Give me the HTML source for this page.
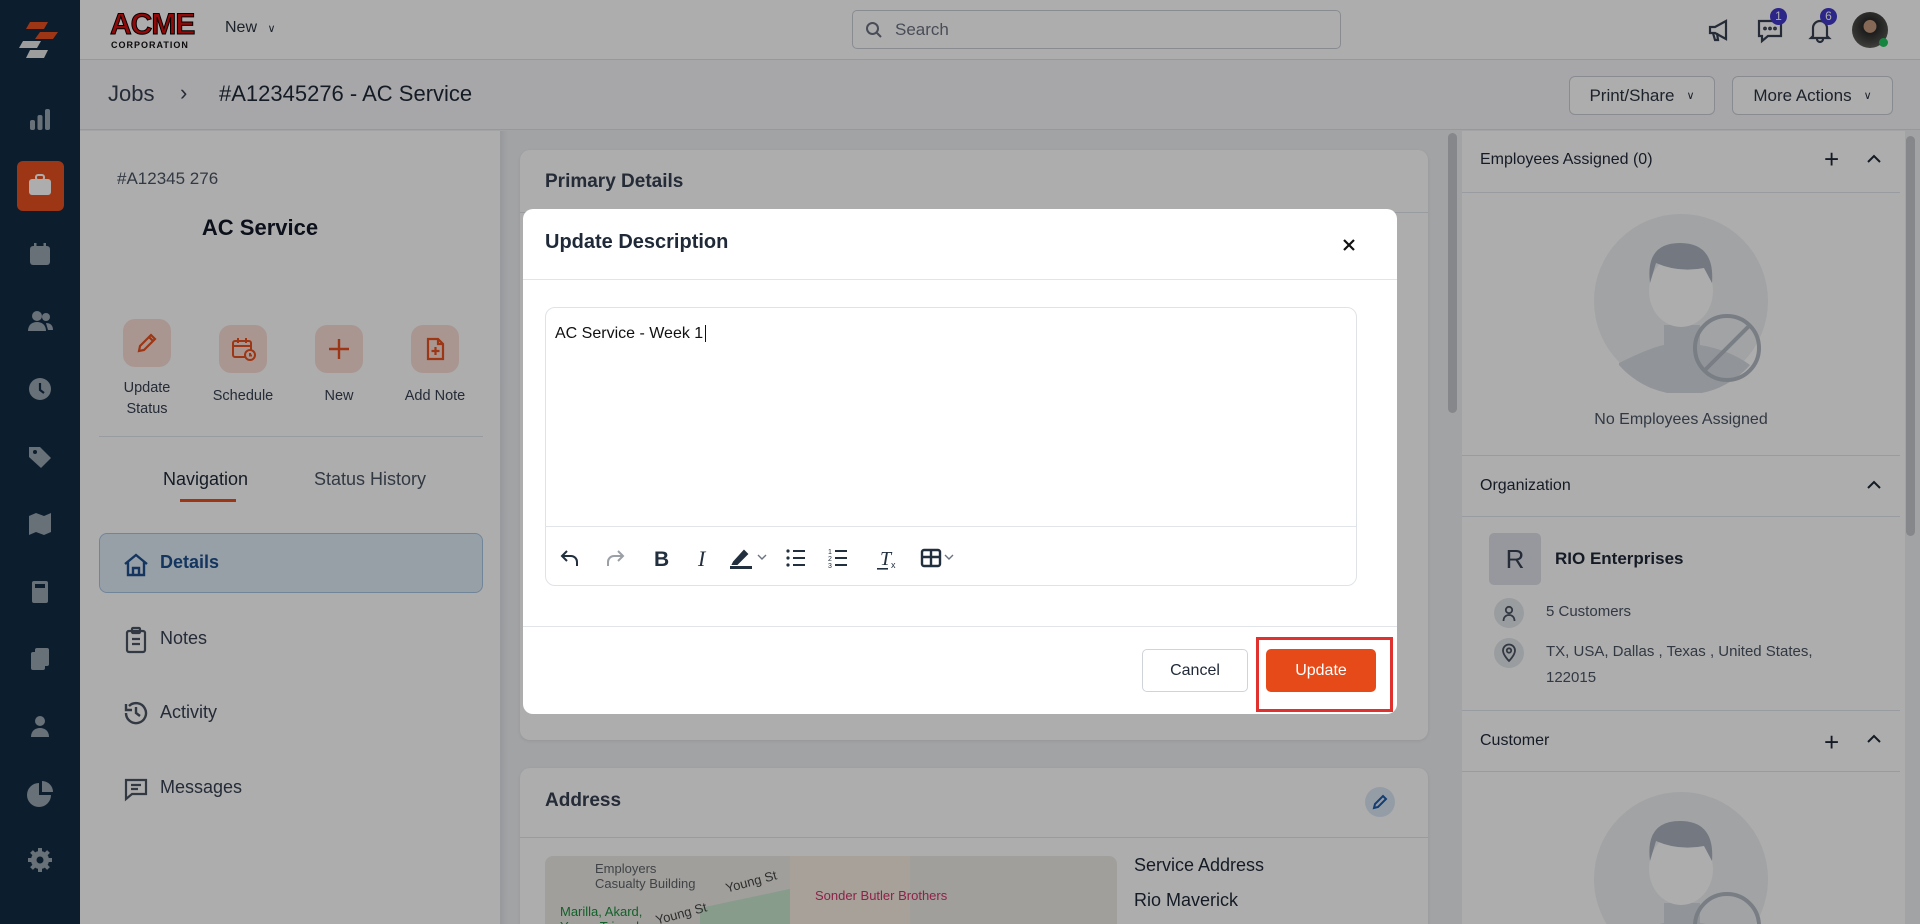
<!DOCTYPE html>
<html style="width:1920px;height:924px;overflow:hidden"><head><meta charset="utf-8">
<style>
*{box-sizing:border-box;margin:0;padding:0}
html,body{width:1920px;height:924px;overflow:hidden}
body{position:relative;font-family:"Liberation Sans",sans-serif;background:#eef0f3;color:#1f2937}
.abs{position:absolute}
.sb{left:0;top:0;width:80px;height:924px;background:#132d45}
.sbi{position:absolute;left:26px;width:28px;height:28px}
.top{left:80px;top:0;width:1840px;height:60px;background:#fff;border-bottom:1px solid #dde1e8}
.crumb{left:80px;top:60px;width:1840px;height:70px;background:#f6f7f9;border-bottom:1px solid #dde1e8}
.btn{position:absolute;border:1px solid #c9ced6;border-radius:6px;background:#fff;font-size:17px;color:#2b3440;display:flex;align-items:center;justify-content:center;gap:12px}
.left{left:80px;top:131px;width:420px;height:793px;background:#fff;overflow:hidden}
.card{background:#fff;border-radius:10px;box-shadow:0 1px 3px rgba(0,0,0,.08);overflow:hidden}
.right{left:1462px;top:131px;width:443px;height:793px;background:#fff;overflow:hidden}
.hdr{font-size:16px;color:#1f2937}
.line{position:absolute;height:1px;background:#e1e5ea}
.act{position:absolute;width:48px;height:48px;border-radius:12px;background:#f9ded6;display:flex;align-items:center;justify-content:center}
.lbl{position:absolute;font-size:14.5px;color:#374151;text-align:center;width:100px}
.nav{position:absolute;left:160px;font-size:18px;color:#374151}
.ov{left:0;top:0;width:1920px;height:924px;background:rgba(0,0,0,.32)}
.modal{left:523px;top:209px;width:874px;height:505px;background:#fff;border-radius:10px}
</style></head><body>
<div class="abs sb">
 <svg class="abs" style="left:18px;top:20px" width="46" height="46" viewBox="0 0 46 46"><polygon points="12,2 30,2 26,9 8,9" fill="#e8501f"/><polygon points="22,12 40,12 35,19 17,19" fill="#e8501f"/><polygon points="5,21 23,21 19,28 1,28" fill="#e8e8e8"/><polygon points="12,30 30,30 26,38 8,38" fill="#e8e8e8"/></svg>
 <svg class="sbi" style="top:105px" viewBox="0 0 28 28" fill="#9aa6b2"><rect x="4" y="15" width="5" height="10" rx="2"/><rect x="11.5" y="10" width="5" height="15" rx="2"/><rect x="19" y="4" width="5" height="21" rx="2"/></svg>
 <div class="abs" style="left:17px;top:161px;width:47px;height:50px;border-radius:6px;background:#e8501f"></div>
 <svg class="sbi" style="top:171px;left:26px" viewBox="0 0 28 28" fill="#fff"><rect x="3" y="8" width="22" height="16" rx="3"/><rect x="10" y="4" width="8" height="5" rx="2" fill="none" stroke="#fff" stroke-width="2"/></svg>
 <svg class="sbi" style="top:240px" viewBox="0 0 28 28" fill="#9aa6b2"><rect x="4" y="6" width="20" height="19" rx="3"/><rect x="8" y="3" width="2.5" height="6"/><rect x="17.5" y="3" width="2.5" height="6"/></svg>
 <svg class="sbi" style="top:307px" viewBox="0 0 28 28" fill="#9aa6b2"><circle cx="11" cy="9" r="5"/><path d="M2 24c0-6 4-9 9-9s9 3 9 9z"/><circle cx="20" cy="10" r="4"/><path d="M20 16c4 0 7 2 7 7h-5z"/></svg>
 <svg class="sbi" style="top:375px" viewBox="0 0 28 28" fill="#9aa6b2"><circle cx="14" cy="14" r="11"/><path d="M14 8v7l4 3" stroke="#132d45" stroke-width="2.2" fill="none"/></svg>
 <svg class="sbi" style="top:443px" viewBox="0 0 28 28" fill="#9aa6b2"><path d="M3 4h11l11 11-10 10L3 14z"/><circle cx="9" cy="9" r="2" fill="#132d45"/></svg>
 <svg class="sbi" style="top:510px" viewBox="0 0 28 28" fill="#9aa6b2"><path d="M3 6l7-3 8 3 7-3v19l-7 3-8-3-7 3z"/></svg>
 <svg class="sbi" style="top:578px" viewBox="0 0 28 28" fill="#9aa6b2"><rect x="6" y="3" width="16" height="22" rx="2"/><rect x="9" y="6" width="10" height="4" fill="#132d45"/></svg>
 <svg class="sbi" style="top:645px" viewBox="0 0 28 28" fill="#9aa6b2"><rect x="9" y="3" width="14" height="18" rx="2"/><rect x="5" y="7" width="14" height="18" rx="2"/></svg>
 <svg class="sbi" style="top:712px" viewBox="0 0 28 28" fill="#9aa6b2"><circle cx="14" cy="9" r="5"/><path d="M5 25c0-6 4-9 9-9s9 3 9 9z"/></svg>
 <svg class="sbi" style="top:780px" viewBox="0 0 28 28" fill="#9aa6b2"><path d="M13 3v12h12A12 12 0 1 1 13 3z"/><path d="M16 1a11 11 0 0 1 11 11H16z"/></svg>
 <svg class="sbi" style="top:846px" viewBox="0 0 28 28" fill="#9aa6b2"><circle cx="14" cy="14" r="9"/><circle cx="14" cy="14" r="3.5" fill="#132d45"/><g stroke="#9aa6b2" stroke-width="4"><path d="M14 2v5M14 21v5M2 14h5M21 14h5M5.5 5.5l3.5 3.5M19 19l3.5 3.5M5.5 22.5L9 19M19 9l3.5-3.5"/></g></svg>
</div>
<div class="abs top">
 <div class="abs" style="left:30px;top:10px;font:900 30px/30px 'Liberation Sans';color:#d40f0f;letter-spacing:-1px;-webkit-text-stroke:1px #000">ACME</div>
 <div class="abs" style="left:31px;top:40px;font:900 9px/10px 'Liberation Sans';color:#111;letter-spacing:1px">CORPORATION</div>
 <div class="abs" style="left:145px;top:19px;font-size:16px;color:#2b3440">New <span style="font-size:11px;margin-left:6px">&#8744;</span></div>
 <div class="abs" style="left:772px;top:10px;width:489px;height:39px;border:1px solid #c9ced6;border-radius:5px;background:#fff">
  <svg class="abs" style="left:12px;top:10px" width="18" height="18" viewBox="0 0 18 18" fill="none" stroke="#6b7280" stroke-width="2"><circle cx="7.5" cy="7.5" r="5.5"/><path d="M12 12l4 4"/></svg>
  <div class="abs" style="left:42px;top:9px;font-size:17px;color:#6b7280">Search</div></div>
 <svg class="abs" style="left:1626px;top:16px" width="28" height="28" viewBox="0 0 28 28" fill="none" stroke="#374151" stroke-width="2.2"><path d="M4 11h5l11-6v18l-11-6H4z"/><path d="M7 17l2 7h3l-1-7"/></svg>
 <svg class="abs" style="left:1676px;top:16px" width="28" height="28" viewBox="0 0 28 28" fill="none" stroke="#374151" stroke-width="2.2"><path d="M3 5h22v15H12l-6 5v-5H3z"/><circle cx="9" cy="12.5" r=".8"/><circle cx="14" cy="12.5" r=".8"/><circle cx="19" cy="12.5" r=".8"/></svg>
 <div class="abs" style="left:1690px;top:8px;width:17px;height:17px;border-radius:50%;background:#4338ca;color:#fff;font-size:12px;text-align:center;line-height:17px">1</div>
 <svg class="abs" style="left:1726px;top:16px" width="28" height="28" viewBox="0 0 28 28" fill="none" stroke="#374151" stroke-width="2.2"><path d="M7 20V12a7 7 0 0 1 14 0v8l2 2H5z"/><path d="M11 23a3 3 0 0 0 6 0"/></svg>
 <div class="abs" style="left:1740px;top:8px;width:17px;height:17px;border-radius:50%;background:#4338ca;color:#fff;font-size:12px;text-align:center;line-height:17px">6</div>
 <div class="abs" style="left:1772px;top:12px;width:36px;height:36px;border-radius:50%;background:radial-gradient(circle at 50% 40%,#c49a7e 0 22%,#2a2a2a 24%,#4b4b48 60%,#7a7a70)"></div>
 <div class="abs" style="left:1799px;top:38px;width:9px;height:9px;border-radius:50%;background:#22c55e"></div>
</div>
<div class="abs crumb">
 <div class="abs" style="left:28px;top:21px;font-size:22px;color:#374151">Jobs</div>
 <div class="abs" style="left:100px;top:20px;font-size:22px;color:#374151">&#8250;</div>
 <div class="abs" style="left:139px;top:21px;font-size:22px;color:#1f2937">#A12345276 - AC Service</div>
 <div class="btn" style="left:1489px;top:16px;width:146px;height:39px">Print/Share <span style="font-size:11px">&#8744;</span></div>
 <div class="btn" style="left:1652px;top:16px;width:161px;height:39px">More Actions <span style="font-size:11px">&#8744;</span></div>
</div>
<div class="abs left">
 <div class="abs" style="left:37px;top:38px;font-size:17px;color:#4b5563">#A12345 276</div>
 <div class="abs" style="left:0;top:84px;width:360px;text-align:center;font-size:22px;font-weight:bold;color:#111827">AC Service</div>
 <div class="act" style="left:43px;top:188px"><svg width="26" height="26" viewBox="0 0 26 26" fill="none" stroke="#e8501f" stroke-width="2.2"><path d="M5 21l1-5L17 5l4 4L10 20z"/><path d="M15 7l4 4"/></svg></div>
 <div class="act" style="left:139px;top:194px"><svg width="28" height="28" viewBox="0 0 28 28" fill="none" stroke="#e8501f" stroke-width="2"><rect x="4" y="6" width="18" height="16" rx="2"/><path d="M4 11h18M9 3v5M17 3v5"/><circle cx="21" cy="20" r="5" fill="#f9ded6"/><path d="M21 18v2.5h2"/></svg></div>
 <div class="act" style="left:235px;top:194px"><svg width="26" height="26" viewBox="0 0 26 26" stroke="#e8501f" stroke-width="2.4"><path d="M13 3v20M3 13h20"/></svg></div>
 <div class="act" style="left:331px;top:194px"><svg width="26" height="26" viewBox="0 0 26 26" fill="none" stroke="#e8501f" stroke-width="2.2"><path d="M6 3h10l5 5v15H6z"/><path d="M16 3v5h5M13.5 11v8M9.5 15h8"/></svg></div>
 <div class="lbl" style="left:17px;top:247px;line-height:21px">Update<br>Status</div>
 <div class="lbl" style="left:113px;top:257px">Schedule</div>
 <div class="lbl" style="left:209px;top:257px">New</div>
 <div class="lbl" style="left:305px;top:257px">Add Note</div>
 <div class="line" style="left:19px;top:305px;width:384px"></div>
 <div class="abs" style="left:83px;top:338px;font-size:18px;color:#1f2937">Navigation</div>
 <div class="abs" style="left:100px;top:368px;width:56px;height:3px;background:#e8501f"></div>
 <div class="abs" style="left:234px;top:338px;font-size:18px;color:#4b5563">Status History</div>
 <div class="abs" style="left:19px;top:402px;width:384px;height:60px;border:1px solid #a7c4e4;border-radius:8px;background:#e1ecf7"></div>
 <svg class="abs" style="left:42px;top:420px" width="28" height="28" viewBox="0 0 28 28" fill="none" stroke="#1e4e8c" stroke-width="2.4"><path d="M3 13L14 4l11 9M6 11v13h16V11"/><path d="M11 24v-7h6v7"/></svg>
 <div class="nav" style="left:80px;top:421px;font-weight:bold;color:#1e4e8c">Details</div>
 <svg class="abs" style="left:44px;top:495px" width="24" height="28" viewBox="0 0 24 28" fill="none" stroke="#4b5563" stroke-width="2.2"><rect x="3" y="5" width="18" height="21" rx="2"/><rect x="8" y="2" width="8" height="5" rx="1"/><path d="M8 13h8M8 18h8"/></svg>
 <div class="nav" style="left:80px;top:497px">Notes</div>
 <svg class="abs" style="left:42px;top:568px" width="28" height="28" viewBox="0 0 28 28" fill="none" stroke="#4b5563" stroke-width="2.4"><path d="M4 14a10 10 0 1 0 3-7"/><path d="M4 5v6h6" /><path d="M14 8v6l4 3"/></svg>
 <div class="nav" style="left:80px;top:571px">Activity</div>
 <svg class="abs" style="left:43px;top:645px" width="26" height="26" viewBox="0 0 26 26" fill="none" stroke="#4b5563" stroke-width="2.2"><path d="M3 4h20v14H9l-6 5z"/><path d="M8 9h10M8 13h7"/></svg>
 <div class="nav" style="left:80px;top:646px">Messages</div>
</div>
<div class="abs" style="left:500px;top:131px;width:8px;height:793px;background:linear-gradient(90deg,#dfe2e6,#eef0f3)"></div>
<div class="abs card" style="left:520px;top:150px;width:908px;height:590px">
 <div class="abs" style="left:25px;top:21px;font-size:19px;font-weight:bold;color:#374151">Primary Details</div>
 <div class="line" style="left:0;top:62px;width:908px"></div>
</div>
<div class="abs card" style="left:520px;top:768px;width:908px;height:156px;border-radius:10px 10px 0 0">
 <div class="abs" style="left:25px;top:22px;font-size:19px;font-weight:bold;color:#374151">Address</div>
 <div class="abs" style="left:845px;top:19px;width:30px;height:30px;border-radius:50%;background:#dbe7f5"></div>
 <svg class="abs" style="left:851px;top:25px" width="18" height="18" viewBox="0 0 18 18" fill="none" stroke="#1e5aa8" stroke-width="2"><path d="M3 15l1-4 8-8 3 3-8 8z"/></svg>
 <div class="line" style="left:0;top:69px;width:908px"></div>
 <div class="abs" style="left:25px;top:88px;width:572px;height:90px;border-radius:8px;background:#ecebe6;overflow:hidden">
  <div class="abs" style="left:155px;top:35px;width:160px;height:70px;background:#c9e6cd;transform:skewY(-12deg)"></div>
  <div class="abs" style="left:245px;top:0;width:120px;height:90px;background:#f6eee3"></div>
  <div class="abs" style="left:50px;top:5px;font-size:13px;color:#5f6368;line-height:15px">Employers<br>Casualty Building</div>
  <div class="abs" style="left:15px;top:48px;font-size:13px;color:#1e8e3e;line-height:15px">Marilla, Akard,<br>Young Triangle</div>
  <div class="abs" style="left:270px;top:32px;font-size:13px;color:#d0336b">Sonder Butler Brothers</div>
  <div class="abs" style="left:180px;top:18px;font-size:13px;color:#444;transform:rotate(-15deg)">Young St</div>
  <div class="abs" style="left:110px;top:50px;font-size:13px;color:#444;transform:rotate(-15deg)">Young St</div>
 </div>
 <div class="abs" style="left:614px;top:87px;font-size:18px;color:#1f2937">Service Address</div>
 <div class="abs" style="left:614px;top:122px;font-size:18px;color:#1f2937">Rio Maverick</div>
</div>
<div class="abs" style="left:1448px;top:133px;width:9px;height:280px;border-radius:5px;background:#c4c7cc"></div>
<div class="abs right">
 <div class="abs hdr" style="left:18px;top:20px">Employees Assigned (0)</div>
 <div class="abs" style="left:362px;top:13px;font-size:26px;color:#1f2937">+</div>
 <svg class="abs" style="left:404px;top:22px" width="16" height="12" viewBox="0 0 16 12" fill="none" stroke="#1f2937" stroke-width="2"><path d="M2 9l6-6 6 6"/></svg>
 <div class="line" style="left:0;top:61px;width:438px"></div>
 <svg class="abs" style="left:130px;top:82px" width="180" height="180" viewBox="0 0 180 180"><circle cx="89" cy="88" r="87" fill="#eef0f3"/><path d="M27 150q30-15 45-18v-20h36v20q30 5 50 20a87 87 0 0 1-131 0z" fill="#d6dae1"/><ellipse cx="89" cy="78" rx="32" ry="36" fill="#fff"/><path d="M58 70q-5-40 30-40 35 0 32 40l-8-15q-25 5-48-5z" fill="#aab1bf"/><circle cx="135" cy="135" r="32" fill="none" stroke="#b3b8c3" stroke-width="4"/><path d="M113 157l44-44" stroke="#b3b8c3" stroke-width="4"/></svg>
 <div class="abs" style="left:0;top:280px;width:438px;text-align:center;font-size:16px;color:#4b5563">No Employees Assigned</div>
 <div class="line" style="left:0;top:324px;width:438px"></div>
 <div class="abs hdr" style="left:18px;top:346px">Organization</div>
 <svg class="abs" style="left:404px;top:348px" width="16" height="12" viewBox="0 0 16 12" fill="none" stroke="#1f2937" stroke-width="2"><path d="M2 9l6-6 6 6"/></svg>
 <div class="line" style="left:0;top:385px;width:438px"></div>
 <div class="abs" style="left:27px;top:402px;width:52px;height:52px;border-radius:5px;background:#dde1e8;font-size:26px;color:#374151;text-align:center;line-height:52px">R</div>
 <div class="abs" style="left:93px;top:418px;font-size:17px;font-weight:bold;color:#1f2937">RIO Enterprises</div>
 <div class="abs" style="left:32px;top:467px;width:30px;height:30px;border-radius:50%;background:#e4e7ec"></div>
 <svg class="abs" style="left:38px;top:473px" width="18" height="18" viewBox="0 0 18 18" fill="none" stroke="#4b5563" stroke-width="1.8"><circle cx="9" cy="6" r="3.2"/><path d="M3.5 17c0-4 2.5-6 5.5-6s5.5 2 5.5 6"/></svg>
 <div class="abs" style="left:84px;top:472px;font-size:15px;color:#4b5563">5 Customers</div>
 <div class="abs" style="left:32px;top:507px;width:30px;height:30px;border-radius:50%;background:#e4e7ec"></div>
 <svg class="abs" style="left:38px;top:512px" width="18" height="20" viewBox="0 0 18 20" fill="none" stroke="#4b5563" stroke-width="1.8"><path d="M9 18s6-6 6-10.5a6 6 0 0 0-12 0C3 12 9 18 9 18z"/><circle cx="9" cy="7.5" r="2.2"/></svg>
 <div class="abs" style="left:84px;top:508px;font-size:15px;color:#4b5563;line-height:26px;width:330px">TX, USA, Dallas , Texas , United States,<br>122015</div>
 <div class="line" style="left:0;top:579px;width:438px"></div>
 <div class="abs hdr" style="left:18px;top:601px">Customer</div>
 <div class="abs" style="left:362px;top:596px;font-size:26px;color:#1f2937">+</div>
 <svg class="abs" style="left:404px;top:602px" width="16" height="12" viewBox="0 0 16 12" fill="none" stroke="#1f2937" stroke-width="2"><path d="M2 9l6-6 6 6"/></svg>
 <div class="line" style="left:0;top:640px;width:438px"></div>
 <svg class="abs" style="left:130px;top:660px" width="180" height="180" viewBox="0 0 180 180"><circle cx="89" cy="88" r="87" fill="#eef0f3"/><path d="M27 150q30-15 45-18v-20h36v20q30 5 50 20a87 87 0 0 1-131 0z" fill="#d6dae1"/><ellipse cx="89" cy="78" rx="32" ry="36" fill="#fff"/><path d="M58 70q-5-40 30-40 35 0 32 40l-8-15q-25 5-48-5z" fill="#aab1bf"/><circle cx="135" cy="135" r="32" fill="none" stroke="#b3b8c3" stroke-width="4"/></svg>
</div>
<div class="abs" style="left:1906px;top:136px;width:9px;height:400px;border-radius:5px;background:#c4c7cc"></div>
<div class="abs ov"></div>
<div class="abs modal">
 <div class="abs" style="left:22px;top:22px;font-size:20px;font-weight:bold;color:#1f2937">Update Description</div>
 <svg class="abs" style="left:819px;top:29px" width="14" height="14" viewBox="0 0 14 14" stroke="#111" stroke-width="2.2"><path d="M2 2l10 10M12 2L2 12"/></svg>
 <div class="line" style="left:0;top:70px;width:874px"></div>
 <div class="abs" style="left:22px;top:98px;width:812px;height:279px;border:1px solid #dfe3e8;border-radius:10px">
  <div class="abs" style="left:9px;top:17px;font-size:16px;color:#111">AC Service - Week 1 <span style="border-left:1.5px solid #111;margin-left:2px"></span></div>
  <div class="line" style="left:0;top:218px;width:810px"></div>
  <svg class="abs" style="left:12px;top:236px" width="560" height="28" viewBox="0 0 560 28" fill="none" stroke="#222f3e" stroke-width="2">
   <path d="M9 7L4 12l5 5M4 12h9a6 6 0 0 1 6 6v4"/>
   <path d="M60 7l5 5-5 5M65 12h-9a6 6 0 0 0-6 6v4" stroke="#9aa0a6"/>
   <text x="96" y="22" font-family="Liberation Sans" font-weight="bold" font-size="21" fill="#222f3e" stroke="none">B</text>
   <text x="140" y="22" font-family="Liberation Serif" font-style="italic" font-size="22" fill="#222f3e" stroke="none">I</text>
   <path d="M176 18l10-11 3 3-10 10h-4z" fill="#222f3e"/><rect x="172" y="22" width="22" height="3" fill="#222f3e" stroke="none"/>
   <path d="M200 11l4 4 4-4" stroke="#6b7280" stroke-width="1.4"/>
   <g fill="#222f3e" stroke="none"><circle cx="230" cy="7" r="1.6"/><circle cx="230" cy="14" r="1.6"/><circle cx="230" cy="21" r="1.6"/><rect x="235" y="6" width="12" height="2"/><rect x="235" y="13" width="12" height="2"/><rect x="235" y="20" width="12" height="2"/>
   <text x="270" y="10" font-size="7" font-family="Liberation Sans">1</text><text x="270" y="17" font-size="7" font-family="Liberation Sans">2</text><text x="270" y="24" font-size="7" font-family="Liberation Sans">3</text><rect x="277" y="6" width="12" height="2"/><rect x="277" y="13" width="12" height="2"/><rect x="277" y="20" width="12" height="2"/>
   <text x="322" y="21" font-family="Liberation Serif" font-style="italic" font-size="20">T</text><text x="333" y="24" font-size="9" font-family="Liberation Sans">x</text><rect x="319" y="24" width="11" height="1.6"/></g>
   <rect x="364" y="6" width="18" height="16" rx="2" stroke-width="2.4"/><path d="M364 13h18M373 6v16" stroke-width="2.4"/>
   <path d="M387 11l4 4 4-4" stroke="#6b7280" stroke-width="1.4"/>
  </svg>
 </div>
 <div class="line" style="left:0;top:417px;width:874px"></div>
 <div class="abs" style="left:619px;top:440px;width:106px;height:43px;border:1px solid #cfd4db;border-radius:5px;font-size:16px;color:#1f2937;text-align:center;line-height:41px">Cancel</div>
 <div class="abs" style="left:733px;top:428px;width:137px;height:75px;border:3px solid #e0312f"></div>
 <div class="abs" style="left:743px;top:440px;width:110px;height:43px;border-radius:5px;background:#e64a19;font-size:16px;color:#fff;text-align:center;line-height:43px">Update</div>
</div>
</body></html>
